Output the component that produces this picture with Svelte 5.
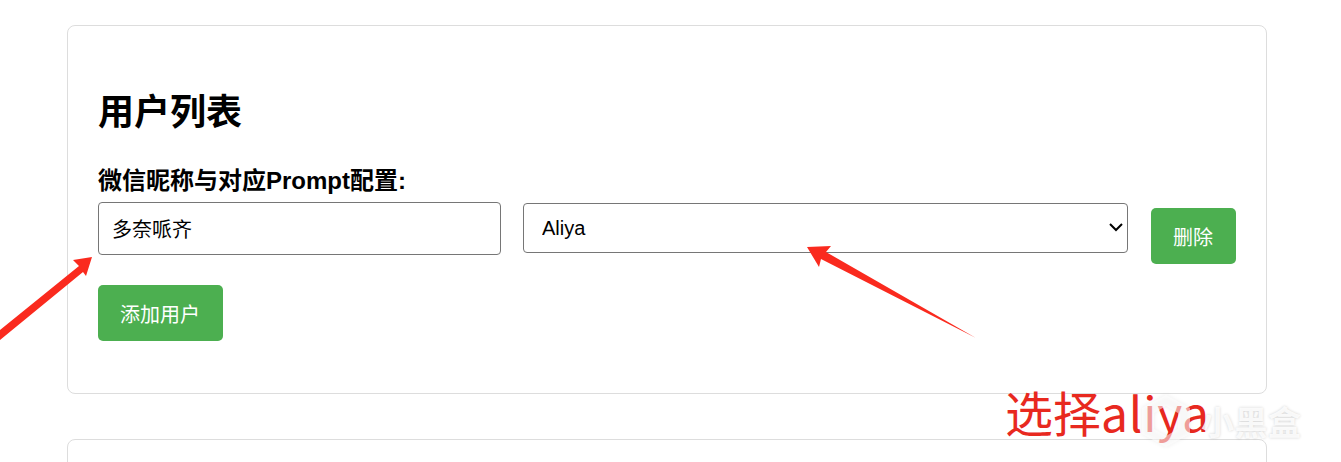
<script>
  let nickname = $state('多奈哌齐');
  let prompt = $state('Aliya');
</script>

<div class="page">
  <section class="card">
    <h2>用户列表</h2>
    <label class="field-label" for="nick">微信昵称与对应Prompt配置:</label>
    <div class="row">
      <input id="nick" class="nick" type="text" bind:value={nickname} />
      <div class="select-wrap">
        <select class="prompt" bind:value={prompt}>
          <option>Aliya</option>
        </select>
        <svg class="chev" width="16" height="10" viewBox="0 0 16 10" aria-hidden="true">
          <path d="M2 2 L8 8 L14 2" fill="none" stroke="#000" stroke-width="2" />
        </svg>
      </div>
      <button class="btn del">删除</button>
    </div>
    <button class="btn add">添加用户</button>
  </section>
  <section class="card next"></section>

  <svg class="overlay" width="1341" height="462" viewBox="0 0 1341 462" aria-hidden="true">
    <polygon fill="#fa2a1e" points="92,257 73,260 79,266 0,330 0,340 83,272 86,276" />
    <polygon fill="#fa2a1e" points="807,247 831,246 826,252 976,338 821,259 819,267" />
  </svg>
  <div class="note">选择<span>aliya</span></div>
  <div class="mark">
    <svg width="60" height="60" viewBox="0 0 60 60" aria-hidden="true">
      <path d="M30 4 L54 17 V43 L30 56 L6 43 V17 Z M18 22 V38 L30 45 L42 38 V22 L30 15 Z" fill="#fff" fill-rule="evenodd" opacity="0.55" />
    </svg>
    <span>小黑盒</span>
  </div>
</div>

<style>
  :global(body) {
    margin: 0;
    background: #fff;
  }
  .page {
    position: relative;
    width: 1341px;
    height: 462px;
    overflow: hidden;
    box-sizing: border-box;
    padding: 25px 0 0 67px;
    font-family: "Liberation Sans", "Noto Sans CJK SC", sans-serif;
    color: #000;
  }
  .card {
    width: 1200px;
    box-sizing: border-box;
    height: 369px;
    border: 1px solid #ddd;
    border-radius: 8px;
    padding: 0 30px;
  }
  .next {
    height: 60px;
    margin-top: 45px;
  }
  h2 {
    margin: 0;
    padding-top: 63px;
    font-size: 36px;
    line-height: 48px;
    font-weight: 700;
  }
  .field-label {
    display: block;
    margin-top: 28px;
    font-size: 24px;
    line-height: 32px;
    font-weight: 700;
  }
  .row {
    display: flex;
    align-items: flex-start;
    gap: 22px;
    margin-top: 5px;
  }
  .nick {
    width: 403px;
    height: 53px;
    box-sizing: border-box;
    padding: 0 13px;
    font: 20px "Liberation Sans", "Noto Sans CJK SC", sans-serif;
    border: 1px solid #767676;
    border-radius: 4px;
    color: #000;
  }
  .select-wrap {
    position: relative;
    margin-top: 1px;
    height: 50px;
  }
  .prompt {
    display: block;
    width: 605px;
    height: 50px;
    box-sizing: border-box;
    padding: 0 18px;
    font: 20px "Liberation Sans", "Noto Sans CJK SC", sans-serif;
    border: 1px solid #767676;
    border-radius: 4px;
    background: #fff;
    color: #000;
    appearance: none;
  }
  .chev {
    position: absolute;
    right: 4px;
    top: 19px;
    pointer-events: none;
  }
  .btn {
    display: block;
    height: 56px;
    padding: 0 23px 0 22px;
    background: #4caf50;
    color: #fff;
    border: 0;
    border-radius: 5px;
    font: 20px "Liberation Sans", "Noto Sans CJK SC", sans-serif;
  }
  .del {
    margin-top: 6px;
    margin-left: 1px;
  }
  .add {
    margin-top: 21px;
  }
  .overlay {
    position: absolute;
    left: 0;
    top: 0;
  }
  .note {
    position: absolute;
    left: 1005px;
    top: 376px;
    font-family: "Noto Sans CJK SC", sans-serif;
    font-size: 48px;
    line-height: 70px;
    font-weight: 400;
    color: #e8291f;
  }
  .note span {
    letter-spacing: 0.8px;
  }
  .mark {
    position: absolute;
    left: 1136px;
    top: 391px;
    display: flex;
    align-items: center;
    gap: 5px;
    color: rgba(255, 255, 255, 0.85);
    font-family: "Noto Sans CJK SC", sans-serif;
    font-size: 33px;
    font-weight: 700;
    letter-spacing: 0.5px;
    text-shadow: 0 0 3px rgba(0, 0, 0, 0.18);
  }
  .mark svg {
    filter: drop-shadow(0 0 2px rgba(0, 0, 0, 0.12));
  }
</style>
